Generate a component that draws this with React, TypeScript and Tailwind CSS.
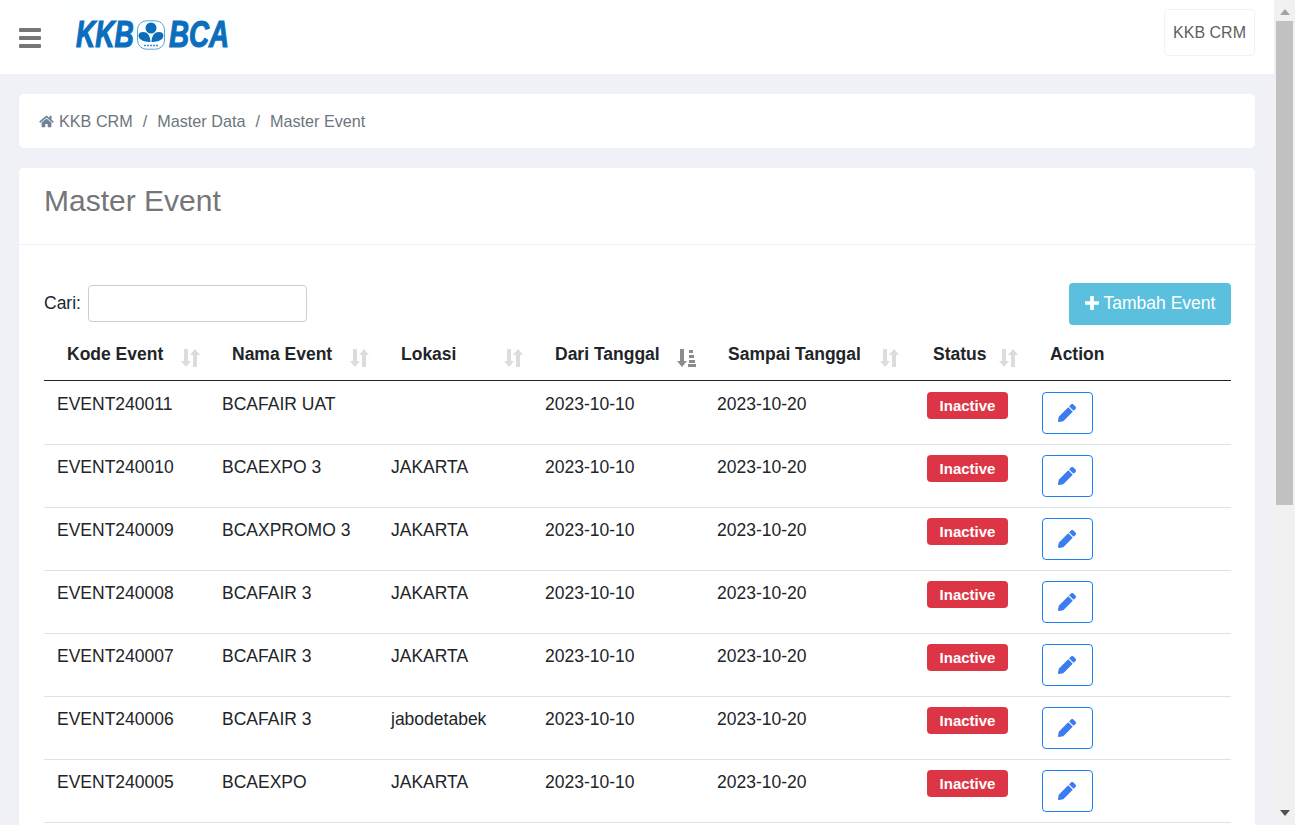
const rows = [
  ["EVENT240011", "BCAFAIR UAT", ""],
  ["EVENT240010", "BCAEXPO 3", "JAKARTA"],
  ["EVENT240009", "BCAXPROMO 3", "JAKARTA"],
  ["EVENT240008", "BCAFAIR 3", "JAKARTA"],
  ["EVENT240007", "BCAFAIR 3", "JAKARTA"],
  ["EVENT240006", "BCAFAIR 3", "jabodetabek"],
  ["EVENT240005", "BCAEXPO", "JAKARTA"],
];

const cols = "grid grid-cols-[165px_169px_154px_173px_209px_115px_1fr]";

const SortIcon = () => (
  <svg width="19" height="20" viewBox="0 0 19 20" className="fill-[#dcdcdc]">
    <path d="M3 1h4v12h3l-5 6-5-6h3z" />
    <path d="M12 7h-3l5-6 5 6h-3v12h-4z" />
  </svg>
);

const SortActive = () => (
  <svg width="19" height="20" viewBox="0 0 19 20" className="fill-[#8c8c8c]">
    <path d="M3 1h4v12h3l-5 6-5-6h3z" />
    <path d="M12 2h4v3h-4zM12 7h5v3h-5zM12 12h6v3h-6zM11 16h8v3h-8z" />
  </svg>
);

const Pencil = () => (
  <svg width="18" height="18" viewBox="0 0 512 512" className="fill-[#3b7cf0]">
    <path d="M497.900 142.100l-46.100 46.100c-4.700 4.700-12.300 4.700-17 0l-111-111c-4.700-4.700-4.700-12.300 0-17l46.100-46.100c18.700-18.700 49.100-18.700 67.900 0l60.100 60.100c18.800 18.700 18.800 49.100 0 67.900zM284.200 99.800L21.600 362.400.4 483.900c-2.900 16.400 11.400 30.600 27.800 27.800l121.500-21.300 262.600-262.600c4.700-4.700 4.700-12.300 0-17l-111-111c-4.800-4.700-12.400-4.700-17.100 0z" />
  </svg>
);

const Logo = () => (
  <div className="w-[187px] h-[64px] mt-[3px] pl-[18px] bg-[#fdfeff] flex items-center font-['Liberation_Sans',sans-serif] font-bold italic text-[#0a6ebd] text-[36px] leading-none [-webkit-text-stroke:1.2px_#0a6ebd]">
    <span className="w-[58px] origin-left scale-x-[0.74] whitespace-nowrap">KKB</span>
    <svg width="30" height="30" viewBox="0 0 30 30" className="shrink-0 ml-[2px]">
      <rect x="1.500" y="0.800" width="27" height="28.400" rx="9" fill="#fff" stroke="#5fa3d8" strokeWidth="1" />
      <circle cx="15" cy="8" r="5.500" fill="#0a6ebd" />
      <path d="M14.500 22c-.2-5-2-10-7.500-10-4.500 0-5.500 3.500-3.500 6.500 2 2.500 7 3.500 11 3.500zM15.500 22c.2-5 2-10 7.500-10 4.500 0 5.500 3.500 3.500 6.500-2 2.500-7 3.500-11 3.500z" fill="#0a6ebd" />
      <path d="M8 25.500h14" stroke="#3d8ac9" strokeWidth="1.500" strokeDasharray="2 1" />
    </svg>
    <span className="w-[60px] ml-[3px] origin-left scale-x-[0.77] whitespace-nowrap">BCA</span>
  </div>
);

const headers = [
  { label: "Kode Event", cell: "pl-[23px]", text: "w-[114px]" },
  { label: "Nama Event", cell: "pl-[23px]", text: "w-[118px]" },
  { label: "Lokasi", cell: "pl-[23px]", text: "w-[103px]" },
  { label: "Dari Tanggal", cell: "pl-[23px]", text: "w-[122px]", active: true },
  { label: "Sampai Tanggal", cell: "pl-[23px]", text: "w-[152px]" },
  { label: "Status", cell: "pl-[19px]", text: "w-[66px]" },
];

export default function App() {
  return (
    <div className="flex h-[825px] w-full overflow-hidden bg-[#f0f1f6] font-['Liberation_Sans',sans-serif] text-[16px] text-[#212529]">
      <div className="flex-1 min-w-0 flex flex-col">
        <header className="h-[74px] shrink-0 bg-white flex items-start justify-between pl-[19px] pr-[19px]">
          <div className="flex items-start">
            <div className="w-[22px] flex flex-col gap-[4px] mr-[17px] mt-[28px]">
              <span className="h-[4px] rounded-[1px] bg-[#777]" />
              <span className="h-[4px] rounded-[1px] bg-[#777]" />
              <span className="h-[4px] rounded-[1px] bg-[#777]" />
            </div>
            <Logo />
          </div>
          <div className="h-[47px] mt-[9px] px-[8px] flex items-center bg-white border border-[#f0f1f6] rounded-[5px] text-[#5f5f5f]">
            KKB CRM
          </div>
        </header>

        <div className="pl-[19px] pr-[19px] pt-[20px]">
          <nav className="h-[54px] bg-white rounded-[5px] flex items-center pl-[20px] text-[16.2px] text-[#6c757d]">
            <svg width="15" height="13" viewBox="0 0 576 512" className="fill-[#6f8296] mr-[5px]">
              <path d="M280.370 148.260L96 300.110V464a16 16 0 0 0 16 16l112.060-.29a16 16 0 0 0 15.920-16V368a16 16 0 0 1 16-16h64a16 16 0 0 1 16 16v95.640a16 16 0 0 0 16 16.050L464 480a16 16 0 0 0 16-16V300L295.670 148.260a12.190 12.190 0 0 0-15.300 0zM571.600 251.470L488 182.560V44.050a12 12 0 0 0-12-12h-56a12 12 0 0 0-12 12v72.610L318.470 43a48 48 0 0 0-61 0L4.340 251.470a12 12 0 0 0-1.600 16.900l25.500 31A12 12 0 0 0 45.150 301l235.220-193.740a12.190 12.190 0 0 1 15.300 0L530.900 301a12 12 0 0 0 16.900-1.600l25.500-31a12 12 0 0 0-1.700-16.930z" />
            </svg>
            <span>KKB CRM</span>
            <span className="px-[10px]">/</span>
            <span>Master Data</span>
            <span className="px-[10px]">/</span>
            <span>Master Event</span>
          </nav>

          <section className="mt-[20px] bg-white rounded-[5px] pb-[40px]">
            <div className="h-[77px] flex items-center px-[25px] border-b border-[#f0f1f6]">
              <h1 className="text-[30px] text-[#75757a] relative top-[-6px]">Master Event</h1>
            </div>
            <div className="pl-[25px] pr-[24px] pt-[38px] text-[17.5px]">
              <div className="flex items-start justify-between h-[49px]">
                <label className="flex items-center mt-[2px]">
                  <span className="w-[44px]">Cari:</span>
                  <input className="w-[219px] h-[37px] border border-[#cccccc] rounded-[4px] bg-white" />
                </label>
                <button className="h-[42px] w-[162px] pb-[2px] rounded-[4px] bg-[#5bc0de] text-white text-[17.5px] flex items-center justify-center gap-[5px]">
                  <svg width="14" height="14" viewBox="0 0 15 15" className="fill-white">
                    <path d="M5.500 0h4v5.500H15v4H9.500V15h-4V9.500H0v-4h5.500z" />
                  </svg>
                  Tambah Event
                </button>
              </div>

              <div className={`${cols} h-[49px] mb-px items-center border-b border-[#212529] font-bold`}>
                {headers.map((h) => (
                  <div key={h.label} className={`flex items-center ${h.cell}`}>
                    <span className={`${h.text} relative top-[-2px]`}>{h.label}</span>
                    <span className="relative top-[2px]">{h.active ? <SortActive /> : <SortIcon />}</span>
                  </div>
                ))}
                <div className="pl-[21px] relative top-[-2px]">Action</div>
              </div>

              {rows.map(([code, name, loc]) => (
                <div key={code} className={`${cols} h-[63px] border-b border-[#dee2e6] pt-[10px] leading-[24px]`}>
                  <div className="pl-[13px]">{code}</div>
                  <div className="pl-[13px]">{name}</div>
                  <div className="pl-[13px]">{loc}</div>
                  <div className="pl-[13px]">2023-10-10</div>
                  <div className="pl-[12px]">2023-10-20</div>
                  <div className="pl-[13px]">
                    <span className="flex w-[81px] h-[27px] items-center justify-center rounded-[4px] bg-[#dc3545] text-white text-[15px] font-bold">
                      Inactive
                    </span>
                  </div>
                  <div className="pl-[13px]">
                    <button className="w-[51px] h-[42px] pr-[2px] border border-[#1a80f5] rounded-[4px] flex items-center justify-center bg-white">
                      <Pencil />
                    </button>
                  </div>
                </div>
              ))}
            </div>
          </section>
        </div>
      </div>

      <div className="w-[21px] shrink-0 bg-[#f1f1f1] flex flex-col items-center relative">
        <svg width="10" height="6" viewBox="0 0 10 6" className="fill-[#a3a3a3] mt-[9px]">
          <path d="M5 0l5 6H0z" />
        </svg>
        <div className="w-[17px] h-[484px] bg-[#c1c1c1] mt-[6px]" />
        <svg width="10" height="6" viewBox="0 0 10 6" className="fill-[#505050] absolute bottom-[9px]">
          <path d="M0 0h10L5 6z" />
        </svg>
      </div>
    </div>
  );
}
